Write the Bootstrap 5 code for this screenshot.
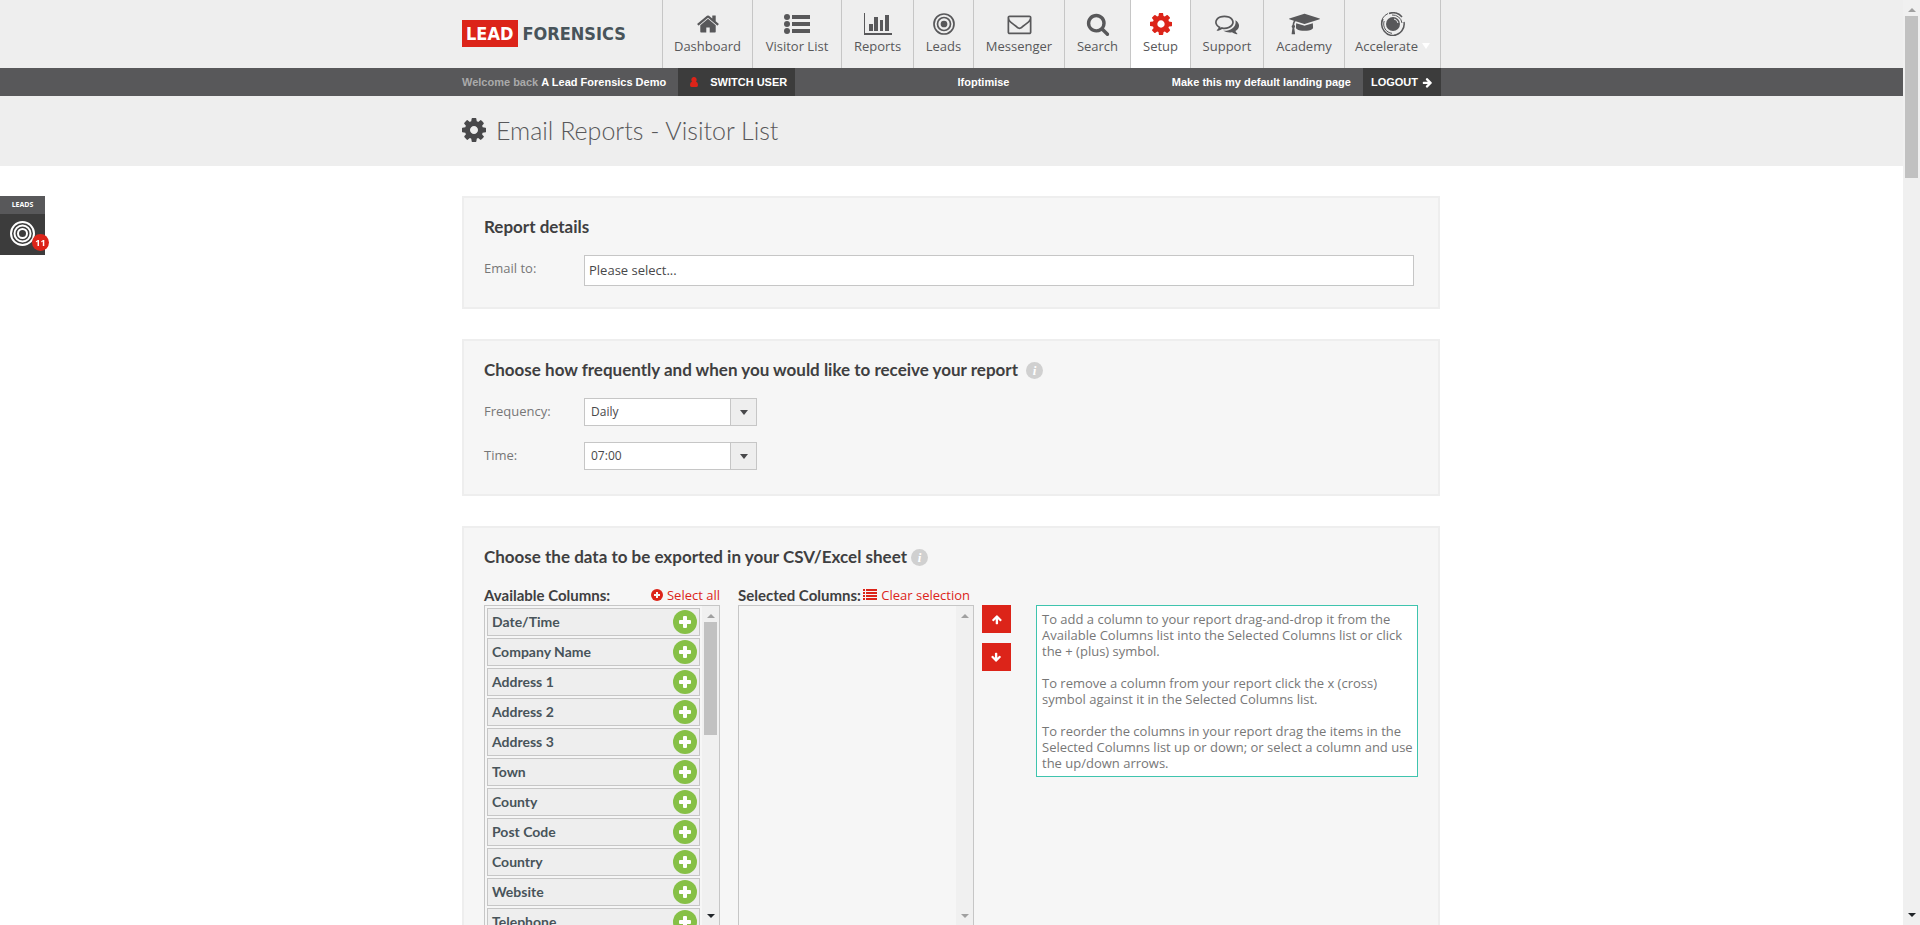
<!DOCTYPE html>
<html lang="en">
<head>
<meta charset="utf-8">
<meta name="viewport" content="width=device-width, initial-scale=1">
<title>Email Reports - Visitor List</title>
<link rel="stylesheet" href="https://cdn.jsdelivr.net/npm/bootstrap@5.3.0/dist/css/bootstrap.min.css">
<style>
  :root { --ink: #58585a; --red: #dc2419; --line: #c6c6c6; --pale: #eeeeee; }
  body { font: 13px/20px "Open Sans", "Noto Sans", sans-serif; color: #777; background: #fff; }
  svg { fill: currentColor; display: block; flex: none; }
  .wrap { max-width: 979px; margin: 0 auto; width: 100%; }
  .pale { background: var(--pale); }

  .brand { font: bold 18px/27px "DejaVu Sans Condensed", sans-serif; color: #48545a; }
  .brand:hover { color: #48545a; }
  .brand span { background: var(--red); color: #fff; padding: 0 5px 0 4px; margin-right: 4px; }
  .mainnav { display: grid; grid-template-columns: 90px 89px 72px 60px 91px 66px 60px 73px 81px 97px; }
  .mainnav a { color: var(--ink); height: 68px; padding-top: 12px; border-left: 1px solid var(--line); }
  .mainnav a:last-child { border-right: 1px solid var(--line); }
  .mainnav a.active { background: #fff; }
  .mainnav a.active svg { color: var(--red); }
  .tri { border: 4px solid transparent; border-top: 6px solid #fff; border-bottom: 0; }

  .userbar { background: var(--ink); font: bold 11px/28px "Liberation Sans", sans-serif; color: #aaa; }
  .userbar .wrap { gap: 12px; }
  .userbar a, .userbar b { color: #fff; }
  .userbar .darkbtn { background: #3c3c3c; }

  .pagehead { height: 70px; color: #48484a; gap: 10px; padding-bottom: 3px; }
  h1 { font: 300 25px/32px Lato, sans-serif; color: var(--ink); }

  .sheet { padding-top: 30px; }
  .panel { background: #f6f6f6; border: 2px solid var(--pale); padding: 19px 20px 21px; margin: 0 1px 30px 0; }
  .panel.freq { padding-bottom: 24px; }
  .panelhead { margin-bottom: 18px; }
  h2 { font: bold 17px/20px Lato, sans-serif; color: #3f3f41; margin: 0; }
  .tip { width: 17px; height: 17px; border-radius: 50%; background: #d0d0d0; color: #fff; font: italic bold 13px/17px "Liberation Serif", serif; text-align: center; }
  .fieldlabel { width: 100px; flex: none; padding-top: 3px; }
  .panel .form-control, .panel .form-select { border: 1px solid var(--line); border-radius: 0; color: #48484a; font-size: 13px; line-height: 20px; }
  .panel .form-control { height: 31px; padding: 0 4px 2px; margin-right: 4px; }
  .panel .form-select {
    width: 173px; height: 28px; font-size: 12px; padding: 3px 32px 3px 6px; background-color: #fff;
    background-image: url("data:image/svg+xml,%3Csvg xmlns='http://www.w3.org/2000/svg' viewBox='0 0 8 5'%3E%3Cpath fill='%2348484a' d='M0 0h8L4 5z'/%3E%3C/svg%3E"), linear-gradient(var(--line), var(--line)), linear-gradient(var(--pale), var(--pale));
    background-position: right 8px center, right 25px center, right; background-size: 8px 5px, 1px 100%, 25px 100%; background-repeat: no-repeat;
  }

  .picker { column-gap: 18px; }
  .colhead { font: bold 15px/20px Lato, sans-serif; color: #3f3f41; }
  .redlink { color: var(--red); }
  .colbox { width: 236px; height: 322px; border: 1px solid var(--line); overflow: hidden; }
  .picklist { padding: 2px 2px 0; display: grid; gap: 2px; align-content: start; }
  .picklist li { height: 28px; border: 1px solid var(--line); background: var(--pale); font: bold 14px/26px Lato, sans-serif; color: #48545a; padding: 0 2px 0 4px; }
  .addbtn { width: 24px; height: 24px; border: 0; padding: 0; border-radius: 50%; background: #86c046; color: #fff; display: grid; place-items: center; }
  .bar { width: 17px; flex: none; background: #f0f0f0; color: #a0a0a0; }
  .bar .thumb { background: #c1c1c1; width: 13px; }
  .side { padding-top: 20px; }
  .movecol { gap: 10px; }
  .movebtn { width: 29px; height: 28px; border: 0; padding: 0; background: var(--red); color: #fff; display: grid; place-items: center; }
  .help { background: #fff; border: 1px solid #3fc4ae; line-height: 16px; padding: 5px 0 5px 5px; margin: 0 0 auto 25px; width: 382px; }

  .leadtab { position: fixed; left: 0; top: 196px; width: 45px; background: #3c3c3c; color: #fff; }
  .leadtab .cap { background: var(--ink); font: bold 7px/18px "Open Sans", sans-serif; }
  .leadtab .ring { height: 41px; padding-bottom: 2px; display: grid; place-items: center; }
  .leadtab .count { position: absolute; right: -4px; bottom: 4px; width: 17px; height: 17px; border-radius: 50%; background: var(--red); font: bold 9px/17px "Open Sans", sans-serif; }
</style>
</head>
<body class="d-flex vh-100 overflow-hidden">
<svg class="d-none">
  <symbol id="cog" viewBox="128 128 1536 1536"><path d="M1152 896q0-106-75-181t-181-75-181 75-75 181 75 181 181 75 181-75 75-181zm512-109v222q0 12-8 23t-20 13l-185 28q-19 54-39 91 35 50 107 138 10 12 10 25t-9 23q-27 37-99 108t-94 71q-12 0-26-9l-138-108q-44 23-91 38-16 136-29 186-7 28-36 28h-222q-14 0-24.500-8.500t-11.500-21.500l-28-184q-49-16-90-37l-141 107q-10 9-25 9-14 0-25-11-126-114-165-168-7-10-7-23 0-12 8-23 15-21 51-66.500t54-70.500q-27-50-41-99l-183-27q-13-2-21-12.500t-8-23.500v-222q0-12 8-23t19-13l186-28q14-46 39-92-40-57-107-138-10-12-10-24 0-10 9-23 26-36 98.500-107.500t94.500-71.500q13 0 26 10l138 107q44-23 91-38 16-136 29-186 7-28 36-28h222q14 0 24.500 8.500t11.500 21.500l28 184q49 16 90 37l142-107q9-9 24-9 13 0 25 10 129 119 165 170 7 8 7 22 0 12-8 23-15 21-51 66.500t-54 70.500q26 50 41 98l183 28q13 2 21 12.500t8 23.500z"/></symbol>
  <symbol id="arrow" viewBox="0 0 1792 1792"><path d="M1600 960q0 54-37 91l-651 651q-39 37-91 37-51 0-90-37l-75-75q-38-38-38-91t38-91l293-293h-704q-52 0-84.500-37.500t-32.500-90.500v-128q0-53 32.500-90.500t84.500-37.500h704l-293-294q-38-36-38-90t38-90l75-75q38-38 90-38 53 0 91 38l651 651q37 35 37 90z"/></symbol>
  <symbol id="plus" viewBox="0 0 12 12"><path d="M5 0h2q1 0 1 1v3h3q1 0 1 1v2q0 1-1 1H8v3q0 1-1 1H5q-1 0-1-1V8H1Q0 8 0 7V5q0-1 1-1h3V1q0-1 1-1z"/></symbol>
  <symbol id="tup" viewBox="0 0 8 4"><path d="M0 4h8L4 0z"/></symbol>
  <symbol id="tdown" viewBox="0 0 8 4"><path d="M0 0h8L4 4z"/></symbol>
</svg>

<div class="flex-grow-1 overflow-hidden">
  <header>
    <div class="pale">
      <div class="wrap d-flex">
        <a href="#" class="brand text-decoration-none d-flex align-items-start mt-3 pt-1"><span>LEAD</span>FORENSICS</a>
        <nav class="mainnav ms-auto text-center">
          <a href="#" class="text-decoration-none"><svg class="mx-auto" width="24" height="24" viewBox="0 0 1792 1792"><path d="M1472 992v480q0 26-19 45t-45 19h-384v-384h-256v384h-384q-26 0-45-19t-19-45v-480l1-6 575-474 575 474q1 2 1 6zm223-69l-62 74q-8 9-21 11h-3q-13 0-21-7l-692-577-692 577q-12 8-24 7-13-2-21-11l-62-74q-8-10-7-23t11-22l719-599q32-26 76-26t76 26l244 204v-195q0-14 9-23t23-9h192q14 0 23 9t9 23v408l219 182q10 8 11 22t-7 23z"/></svg>Dashboard</a>
          <a href="#" class="text-decoration-none"><svg class="mx-auto" width="26" height="24" viewBox="0 0 26 24"><circle cx="3" cy="5" r="3"/><circle cx="3" cy="12" r="3"/><circle cx="3" cy="19" r="3"/><path d="M8 3h18v4H8zM8 10h18v4H8zM8 17h18v4H8z"/></svg>Visitor List</a>
          <a href="#" class="text-decoration-none"><svg class="mx-auto" width="28" height="24" viewBox="0 0 28 24"><path d="M0 1h1v20h27v2H0zM5 12h4v7H5zM10 5h4v14h-4zM16 8h3v11h-3zM21 3h4v16h-4z"/></svg>Reports</a>
          <a href="#" class="text-decoration-none"><svg class="mx-auto" width="24" height="24" viewBox="0 0 24 24" fill="none" stroke="currentColor" stroke-width="1.700"><g fill="#eee"><circle cx="12" cy="12" r="10"/><circle cx="12" cy="12" r="6.500"/></g><circle cx="12" cy="12" r="2.500" fill="currentColor"/></svg>Leads</a>
          <a href="#" class="text-decoration-none"><svg class="mx-auto" width="25" height="24" viewBox="0 0 1792 1792"><path d="M1664 1504v-768q-32 36-69 66-268 206-426 338-51 43-83 67t-86 48-103 25h-2q-48 0-102-25t-87-48-83-67q-158-132-426-338-37-30-69-66v768q0 13 10 22t22 10h1472q13 0 22-10t10-22zm0-1051v-25l-1-13-3-12-5-9-9-8-14-2h-1472q-13 0-22 9t-10 23q0 168 147 284 193 152 401 317 6 5 35 29t46 38 45 31 50 28 43 9h2q20 0 43-9t50-28 45-31 46-38 35-29q208-165 401-317 54-43 100-116t47-131zm128-37v1088q0 66-47 113t-113 47h-1472q-66 0-113-47t-47-113v-1088q0-66 47-113t113-47h1472q66 0 113 47t47 113z"/></svg>Messenger</a>
          <a href="#" class="text-decoration-none"><svg class="mx-auto" width="24" height="24" viewBox="0 0 1792 1792"><path d="M1216 832q0-185-131-317t-317-131-316 131-132 317 132 316 316 132 317-132 131-316zm512 832q0 52-38 90t-90 38q-54 0-90-38l-343-342q-179 124-399 124-143 0-273-55t-225-150-150-225-56-274 56-273 150-225 225-150 273-56 274 56 225 150 150 225 55 273q0 220-124 399l343 343q37 37 37 90z"/></svg>Search</a>
          <a href="#" class="text-decoration-none active"><svg class="mx-auto" width="24" height="24" viewBox="-1 -1 24 24"><use href="#cog" width="22" height="22"/></svg>Setup</a>
          <a href="#" class="text-decoration-none"><svg class="mx-auto" width="26" height="24" viewBox="0 0 1792 1792"><path d="M704 384q-153 0-286 52t-212 141-78 191q0 82 53 158t149 132l97 56-35 84q34-20 62-39l44-31 53 10q78 14 153 14 153 0 286-52t212-141 78-191-78-191-212-141-286-52zm0-128q191 0 354 68t256 187 94 257-94 257-256 187-354 68q-86 0-176-16-124 88-278 128-36 9-86 16h-3q-11 0-20-8t-12-21q-1-12 5-23 20-26 45-52 60-66 91-137-124-72-195-177t-71-224q0-139 94-257t256-187 354-68zm822 1169q30 70 94 142l40 44q8 12 8 24-3 24-36 29-50-7-86-16-154-40-278-128-90 16-176 16-271 0-472-132 58 4 88 4 161 0 309-45t264-129q125-92 192-212t67-254q0-77-23-152 129 71 204 178t75 230q0 120-71 224t-199 177z"/></svg>Support</a>
          <a href="#" class="text-decoration-none"><svg class="mx-auto" width="33" height="24" viewBox="0 0 2304 1792"><path d="M1774 836l18 316q4 69-82 128t-235 93-323 35-323-35-235-93-82-128l18-316 574 181q22 7 48 7t48-7zm530-324q0 23-22 31l-1120 352q-4 1-10 1t-10-1l-652-206q-43 34-71 111t-34 179q63 36 63 109 0 69-58 107l58 433q2 14-8 25-9 11-24 11h-192q-15 0-24-11-10-11-8-25l58-433q-58-38-58-107 0-73 65-111 11-207 98-330l-333-104q-22-8-22-31t22-31l1120-352q4-1 10-1t10 1l1120 352q22 8 22 31z"/></svg>Academy</a>
          <a href="#" class="text-decoration-none"><svg class="mx-auto" width="26" height="24" viewBox="0 0 26 24"><circle cx="13" cy="12" r="7"/><g fill="none" stroke="currentColor"><path stroke-width="1.500" d="M9 1.500A11 11 0 0 1 22 5M24 10a11.300 11.300 0 0 1-10 13.200M16 23A11.300 11.300 0 0 1 3 7"/><path d="M8 1.500A11.500 11.500 0 0 0 1.500 13M12 3a9.300 9.300 0 0 1 10 8M4.200 9A9.300 9.300 0 0 0 12 21.300"/></g><path fill="none" stroke="#eee" d="M14 7a5 5 0 0 1 4 4"/></svg><span class="d-flex align-items-center justify-content-center gap-1">Accelerate<i class="tri"></i></span></a>
        </nav>
      </div>
    </div>
    <div class="userbar">
      <div class="wrap d-flex">
        <div>Welcome back <b>A Lead Forensics Demo</b></div>
        <a href="#" class="darkbtn d-flex align-items-center text-decoration-none px-2"><svg class="mx-1" width="8" height="10" viewBox="0 0 8 10" color="#dc2419"><path d="M4 0a2.500 2.700 0 0 1 2 4.500Q8 5 8 8q0 2-1.500 2h-5Q0 10 0 8q0-3 2-3.500A2.500 2.700 0 0 1 4 0z"/></svg><span class="ps-2">SWITCH USER</span></a>
        <a href="#" class="text-decoration-none mx-auto">lfoptimise</a>
        <a href="#" class="text-decoration-none">Make this my default landing page</a>
        <a href="#" class="darkbtn d-flex align-items-center gap-1 text-decoration-none px-2">LOGOUT <svg width="11" height="11"><use href="#arrow"/></svg></a>
      </div>
    </div>
    <div class="pale">
      <div class="wrap pagehead d-flex align-items-center"><svg width="24" height="24"><use href="#cog"/></svg><h1 class="m-0">Email Reports - Visitor List</h1></div>
    </div>
  </header>

  <main class="wrap sheet">
    <section class="panel">
      <div class="panelhead"><h2>Report details</h2></div>
      <div class="d-flex"><label class="fieldlabel" for="emailto">Email to:</label><input id="emailto" class="form-control" type="text" value="Please select..."></div>
    </section>

    <section class="panel freq">
      <div class="panelhead d-flex gap-2 align-items-center"><h2>Choose how frequently and when you would like to receive your report</h2><span class="tip">i</span></div>
      <div class="d-flex mb-3"><label class="fieldlabel" for="frequency">Frequency:</label><select id="frequency" class="form-select"><option>Daily</option></select></div>
      <div class="d-flex"><label class="fieldlabel" for="time">Time:</label><select id="time" class="form-select"><option>07:00</option></select></div>
    </section>

    <section class="panel">
      <div class="panelhead d-flex gap-1 align-items-center"><h2>Choose the data to be exported in your CSV/Excel sheet</h2><span class="tip">i</span></div>
      <div class="picker d-flex align-items-end">
        <div>
          <div class="d-flex align-items-center"><span class="colhead me-auto">Available Columns:</span><a href="#" class="redlink text-decoration-none d-flex align-items-center gap-1"><svg width="12" height="12" viewBox="0 0 12 12"><circle cx="6" cy="6" r="6"/><path fill="#f6f6f6" d="M5 3h2v2h2v2H7v2H5V7H3V5h2z"/></svg>Select all</a></div>
          <div class="colbox d-flex">
            <ul class="picklist list-unstyled m-0 flex-grow-1">
              <li class="d-flex justify-content-between align-items-center">Date/Time<button class="addbtn" aria-label="Add Date/Time"><svg width="12" height="12"><use href="#plus"/></svg></button></li>
              <li class="d-flex justify-content-between align-items-center">Company Name<button class="addbtn" aria-label="Add Company Name"><svg width="12" height="12"><use href="#plus"/></svg></button></li>
              <li class="d-flex justify-content-between align-items-center">Address 1<button class="addbtn" aria-label="Add Address 1"><svg width="12" height="12"><use href="#plus"/></svg></button></li>
              <li class="d-flex justify-content-between align-items-center">Address 2<button class="addbtn" aria-label="Add Address 2"><svg width="12" height="12"><use href="#plus"/></svg></button></li>
              <li class="d-flex justify-content-between align-items-center">Address 3<button class="addbtn" aria-label="Add Address 3"><svg width="12" height="12"><use href="#plus"/></svg></button></li>
              <li class="d-flex justify-content-between align-items-center">Town<button class="addbtn" aria-label="Add Town"><svg width="12" height="12"><use href="#plus"/></svg></button></li>
              <li class="d-flex justify-content-between align-items-center">County<button class="addbtn" aria-label="Add County"><svg width="12" height="12"><use href="#plus"/></svg></button></li>
              <li class="d-flex justify-content-between align-items-center">Post Code<button class="addbtn" aria-label="Add Post Code"><svg width="12" height="12"><use href="#plus"/></svg></button></li>
              <li class="d-flex justify-content-between align-items-center">Country<button class="addbtn" aria-label="Add Country"><svg width="12" height="12"><use href="#plus"/></svg></button></li>
              <li class="d-flex justify-content-between align-items-center">Website<button class="addbtn" aria-label="Add Website"><svg width="12" height="12"><use href="#plus"/></svg></button></li>
              <li class="d-flex justify-content-between align-items-center">Telephone<button class="addbtn" aria-label="Add Telephone"><svg width="12" height="12"><use href="#plus"/></svg></button></li>
            </ul>
            <div class="bar d-flex flex-column align-items-center py-2"><svg width="8" height="4"><use href="#tup"/></svg><div class="thumb mt-1" style="height:113px"></div><svg class="mt-auto text-dark" width="8" height="4"><use href="#tdown"/></svg></div>
          </div>
        </div>
        <div class="d-flex align-items-end gap-2">
          <div>
            <div class="d-flex align-items-center me-1"><span class="colhead">Selected Columns:</span><a href="#" class="redlink text-decoration-none d-flex align-items-center gap-1 ms-auto"><svg width="14" height="12" viewBox="0 0 14 12"><path d="M0 0h2v2H0zM3 0h11v2H3zM0 3h2v2H0zM3 3h11v2H3zM0 6h2v2H0zM3 6h11v2H3zM0 9h2v2H0zM3 9h11v2H3z"/></svg>Clear selection</a></div>
            <div class="colbox d-flex"><div class="bar d-flex flex-column align-items-center py-2 ms-auto"><svg width="8" height="4"><use href="#tup"/></svg><svg class="mt-auto" width="8" height="4"><use href="#tdown"/></svg></div></div>
          </div>
          <div class="side d-flex align-self-stretch">
            <div class="movecol d-grid align-content-start">
              <button class="movebtn" aria-label="Move up"><svg width="11" height="11" viewBox="0 0 11 11"><use href="#arrow" width="11" height="11" transform="rotate(-90 5.500 5.500)"/></svg></button>
              <button class="movebtn" aria-label="Move down"><svg width="11" height="11" viewBox="0 0 11 11"><use href="#arrow" width="11" height="11" transform="rotate(90 5.500 5.500)"/></svg></button>
            </div>
            <div class="help">To add a column to your report drag-and-drop it from the Available Columns list into the Selected Columns list or click the + (plus) symbol.<br><br>To remove a column from your report click the x (cross) symbol against it in the Selected Columns list.<br><br>To reorder the columns in your report drag the items in the Selected Columns list up or down; or select a column and use the up/down arrows.</div>
          </div>
        </div>
      </div>
    </section>
  </main>
</div>

<aside class="bar d-flex flex-column align-items-center py-2"><svg width="8" height="4"><use href="#tup"/></svg><div class="thumb mt-1" style="height:162px"></div><svg class="mt-auto text-dark" width="8" height="4"><use href="#tdown"/></svg></aside>

<a href="#" class="leadtab text-center text-decoration-none"><div class="cap">LEADS</div><div class="ring"><svg width="25" height="25" viewBox="0 0 25 25" stroke="#fff" stroke-width="2"><g fill="#3c3c3c"><circle cx="12.500" cy="12.500" r="11.500"/><circle cx="12.500" cy="12.500" r="8"/><circle cx="12.500" cy="12.500" r="4.500"/></g></svg></div><span class="count">11</span></a>
<script src="https://cdn.jsdelivr.net/npm/bootstrap@5.3.0/dist/js/bootstrap.bundle.min.js"></script>
</body>
</html>
